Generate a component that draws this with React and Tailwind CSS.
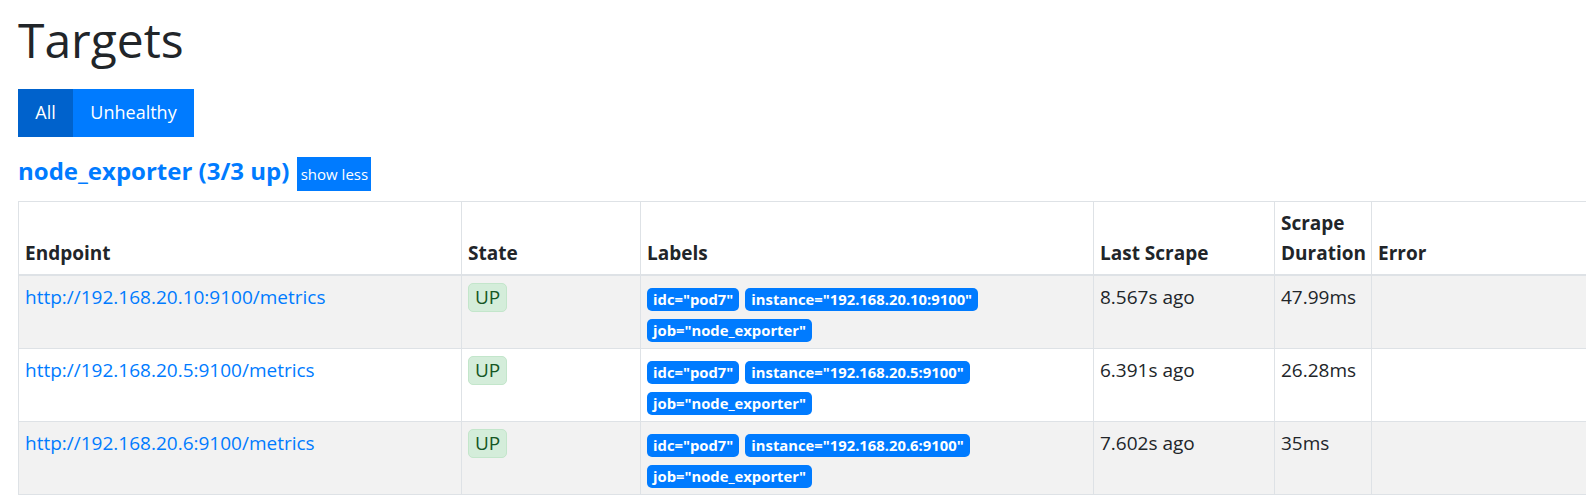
// Targets page — scrape pool table (Prometheus style)

const objetivos = [
    { url: 'http://192.168.20.10:9100/metrics', instancia: '192.168.20.10:9100', ultimo: '8.567s ago', duracion: '47.99ms' },
    { url: 'http://192.168.20.5:9100/metrics', instancia: '192.168.20.5:9100', ultimo: '6.391s ago', duracion: '26.28ms' },
    { url: 'http://192.168.20.6:9100/metrics', instancia: '192.168.20.6:9100', ultimo: '7.602s ago', duracion: '35ms' },
];

function Etiqueta({ children }) {
    return (
        <span className="inline-block h-[23px] rounded-[5px] bg-[#007bff] px-[6px] text-[14.8px] font-bold leading-[23px] text-white whitespace-nowrap">
            {children}
        </span>
    );
}

export default function App() {
    const th = 'border border-[#dee2e6] border-b-2 px-[6px] py-[6px] text-left align-bottom font-bold leading-[30px] text-[#212529]';
    const td = 'border border-[#dee2e6] px-[6px] pt-[7px] pb-[5px] align-top leading-[28.8px]';

    return (
        <div className="w-[1586px] h-[499px] overflow-hidden bg-white font-['Open_Sans','Noto_Sans',sans-serif] text-[19px] text-[#212529]">
            <div className="pl-[18px]">
                {/* ---------- CABECERA ---------- */}
                <h1 className="mt-[11px] text-[48px] leading-[57.6px] font-normal">Targets</h1>

                <div className="mt-[20px] flex h-[48px]">
                    <button className="w-[55px] bg-[#0062cc] text-white text-[18px]">All</button>
                    <button className="w-[121px] bg-[#007bff] text-white text-[18px]">Unhealthy</button>
                </div>

                <div className="mt-[20px] flex items-start h-[34px]">
                    <span className="text-[24px] leading-[28px] font-bold text-[#007bff]">node_exporter (3/3 up)</span>
                    <button className="ml-[8px] h-[34px] w-[74px] bg-[#007bff] text-[15px] text-white leading-[34px]">
                        show less
                    </button>
                </div>

                {/* ---------- TABLA ---------- */}
                <table className="mt-[10px] w-[1682px] table-fixed border-collapse text-[19px]">
                    <colgroup>
                        <col className="w-[443px]" />
                        <col className="w-[179px]" />
                        <col className="w-[453px]" />
                        <col className="w-[181px]" />
                        <col className="w-[97px]" />
                        <col className="w-[329px]" />
                    </colgroup>
                    <thead>
                        <tr className="h-[73px]">
                            <th className={th}>Endpoint</th>
                            <th className={th}>State</th>
                            <th className={th}>Labels</th>
                            <th className={th}>Last Scrape</th>
                            <th className={th}>Scrape Duration</th>
                            <th className={th}>Error</th>
                        </tr>
                    </thead>
                    <tbody>
                        {objetivos.map((o, i) => (
                            <tr key={o.url} className={i % 2 === 0 ? 'h-[73px] bg-[#f2f2f2]' : 'h-[73px] bg-white'}>
                                <td className={td}>
                                    <a href="#" className="text-[#007bff]">{o.url}</a>
                                </td>
                                <td className={td}>
                                    <span className="-mt-[1px] inline-block h-[29px] rounded-[5px] border border-[#c3e6cb] bg-[#d4edda] px-[6px] leading-[27px] text-[#155724]">
                                        UP
                                    </span>
                                </td>
                                <td className={td}>
                                    <div className="flex flex-wrap gap-x-[6px] gap-y-[7px] pt-[5px] h-[60px]">
                                        <Etiqueta>idc="pod7"</Etiqueta>
                                        <Etiqueta>instance="{o.instancia}"</Etiqueta>
                                        <Etiqueta>job="node_exporter"</Etiqueta>
                                    </div>
                                </td>
                                <td className={td}>{o.ultimo}</td>
                                <td className={td}>{o.duracion}</td>
                                <td className={td}></td>
                            </tr>
                        ))}
                    </tbody>
                </table>
            </div>
        </div>
    );
}
